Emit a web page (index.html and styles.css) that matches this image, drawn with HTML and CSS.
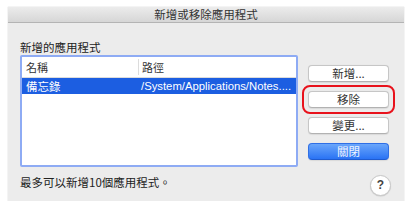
FILE: index.html
```html
<!DOCTYPE html>
<html lang="zh-Hant">
<head>
<meta charset="utf-8">
<title>新增或移除應用程式</title>
<link rel="stylesheet" href="styles.css">
</head>
<body>
<div class="window">
  <div class="titlebar">新增或移除應用程式</div>
  <div class="content">
    <div class="left">
      <div class="label">新增的應用程式</div>
      <div class="table">
        <div class="thead">
          <div class="c1">名稱</div>
          <div class="c2">路徑</div>
        </div>
        <div class="row selected">
          <div class="c1">備忘錄</div>
          <div class="c2">/System/Applications/Notes....</div>
        </div>
      </div>
      <div class="note">最多可以新增10個應用程式。</div>
    </div>
    <div class="right">
      <button class="btn">新增...</button>
      <div class="ring"><button class="btn">移除</button></div>
      <button class="btn">變更...</button>
      <button class="btn primary">關閉</button>
      <button class="help">?</button>
    </div>
  </div>
</div>
</body>
</html>
```
FILE: styles.css
```css
html, body {
  margin: 0;
  padding: 0;
  background: #ffffff;
}
body {
  font-family: "Noto Sans CJK TC", "Liberation Sans", sans-serif;
  color: #222;
}
.window {
  margin: 7px 0 0 8px;
  width: 396px;
  height: 194px;
  background: #ececec;
  box-shadow: 0 0 1px rgba(0,0,0,0.25);
  overflow: hidden;
}
.titlebar {
  height: 15px;
  line-height: 15px;
  text-align: center;
  font-size: 11.5px;
  color: #333;
  background: linear-gradient(#ececec, #d6d6d6);
  border-bottom: 1px solid #b4b4b4;
}
.content {
  display: flex;
  padding: 17px 15px 0 12px;
}
.left {
  width: 278px;
  display: flex;
  flex-direction: column;
}
.label {
  font-size: 11.5px;
  line-height: 15px;
  height: 15px;
  color: #222;
}
.table {
  height: 108px;
  background: #fff;
  border: 2px solid #8eabf4;
  border-radius: 2px;
}
.thead {
  display: flex;
  height: 20px;
  font-size: 11px;
  color: #333;
  border-bottom: 1px solid #dcdcdc;
}
.thead .c1 {
  width: 112px;
  padding-left: 4px;
  border-right: 1px solid #dcdcdc;
  margin: 2px 0;
  line-height: 16px;
}
.thead .c2 {
  padding-left: 3px;
  margin: 2px 0;
  line-height: 16px;
}
.row {
  display: flex;
  height: 16px;
  line-height: 16px;
  font-size: 11.5px;
}
.row .c1 {
  width: 113px;
  padding-left: 4px;
}
.row .c2 {
  padding-left: 2px;
  font-family: "Liberation Sans", sans-serif;
  font-size: 11.3px;
  white-space: nowrap;
}
.selected {
  background: #1c5ee1;
  color: #fff;
}
.note {
  margin-top: 8px;
  font-size: 11.5px;
  line-height: 15px;
  color: #222;
}
.right {
  width: 81px;
  margin-left: 10px;
  margin-top: 25px;
  display: flex;
  flex-direction: column;
  gap: 9px;
}
.btn {
  display: block;
  width: 81px;
  height: 17px;
  margin: 0;
  padding: 0;
  font-family: "Noto Sans CJK TC", "Liberation Sans", sans-serif;
  font-size: 11.5px;
  line-height: 15px;
  color: #333;
  background: #fff;
  border: 1px solid #c6c6c6;
  border-bottom-color: #b2b2b2;
  border-radius: 4px;
  box-shadow: 0 0.5px 1px rgba(0,0,0,0.08);
}
.ring {
  margin: -6px -6px;
  padding: 4px 4px;
  border: 2px solid #e8121c;
  border-radius: 8px;
}
.primary {
  color: #f2f6ff;
  background: linear-gradient(#6aa6fb, #2a73f4);
  border: 1px solid #2f6fe6;
  border-bottom-color: #1f5bd0;
}
.help {
  align-self: flex-end;
  margin-top: 6px;
  margin-right: -2px;
  width: 21px;
  height: 21px;
  padding: 0;
  border-radius: 50%;
  background: #fff;
  border: 1px solid #c8c8c8;
  box-shadow: 0 0.5px 1px rgba(0,0,0,0.15);
  font-family: "Liberation Sans", sans-serif;
  font-weight: bold;
  font-size: 12px;
  color: #444;
  line-height: 19px;
}
```
